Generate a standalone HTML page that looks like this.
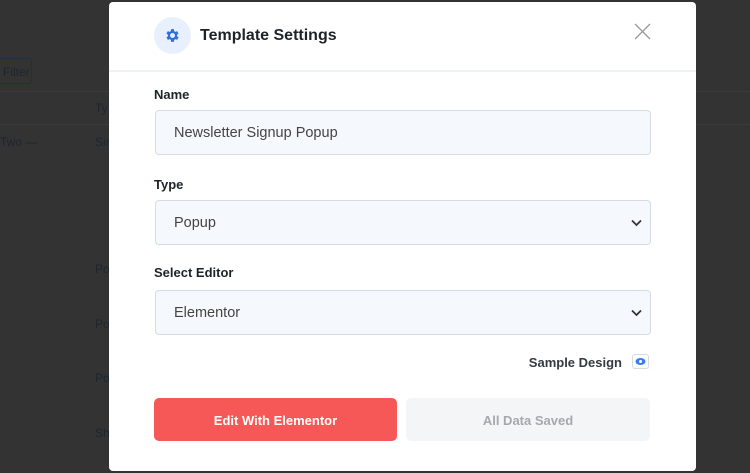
<!DOCTYPE html><html><head><style>
body{margin:0;width:750px;height:473px;background:#333;font-family:"Liberation Sans",sans-serif;position:relative;overflow:hidden}
.bg{position:absolute;color:#1d2530;font-size:12px}
.m{position:absolute;left:109px;top:2px;width:587px;height:469px;background:#fff;border-radius:4px}
.lbl{position:absolute;left:45px;font-size:13px;font-weight:bold;color:#1e2329}
.inp{position:absolute;left:46px;height:45px;border:1px solid #d5dbe5;border-radius:4px;background:#f5f8fd;font-size:14.5px;color:#444;line-height:45px;padding-left:18px;box-sizing:border-box;width:496px}
.chev{position:absolute;right:8px;top:18px}
</style></head><body>
<div class="bg" style="left:-4px;top:58px;width:36px;height:26px;border:1px solid #1d3048;border-radius:3px;line-height:26px;padding-left:6px;box-sizing:border-box">Filter</div>
<div style="position:absolute;left:0;top:91px;width:750px;height:1px;background:#3a3a3a"></div>
<div style="position:absolute;left:0;top:124px;width:750px;height:1px;background:#3a3a3a"></div>
<div class="bg" style="left:95px;top:101px">Ty</div>
<div class="bg" style="left:0;top:135px">Two —</div>
<div class="bg" style="left:95px;top:135px">Sin</div>
<div class="bg" style="left:95px;top:262px">Po</div>
<div class="bg" style="left:95px;top:317px">Po</div>
<div class="bg" style="left:95px;top:371px">Po</div>
<div class="bg" style="left:95px;top:426px">Sh</div>
<div class="m">
<div style="position:absolute;left:45px;top:15px;width:37px;height:37px;border-radius:50%;background:#e9f0fd"></div>
<svg style="position:absolute;left:55px;top:25px" width="17" height="17" viewBox="0 0 24 24"><path fill="#2f6fe4" d="M19.4 13a7.5 7.5 0 000-2l2.1-1.6-2-3.5-2.5 1a7.6 7.6 0 00-1.7-1L15 3h-4l-.4 2.9a7.6 7.6 0 00-1.7 1l-2.5-1-2 3.5L6.6 11a7.5 7.5 0 000 2l-2.1 1.6 2 3.5 2.5-1a7.6 7.6 0 001.7 1L11 21h4l.4-2.9a7.6 7.6 0 001.7-1l2.5 1 2-3.5zM13 15.5a3.5 3.5 0 110-7 3.5 3.5 0 010 7z" transform="translate(-1 0)"/></svg>
<div style="position:absolute;left:91px;top:25px;font-size:16px;font-weight:bold;color:#1e2329">Template Settings</div>
<svg style="position:absolute;left:525px;top:21px" width="17" height="17"><path d="M1 1L16 16M16 1L1 16" stroke="#999" stroke-width="1.3"/></svg>
<div style="position:absolute;left:0;top:68px;width:587px;height:2px;background:#eef1f5"></div>
<div class="lbl" style="top:85px">Name</div>
<div class="inp" style="top:108px">Newsletter Signup Popup</div>
<div class="lbl" style="top:175px">Type</div>
<div class="inp" style="top:198px">Popup<svg class="chev" width="11" height="8"><path d="M1 1.5L5.5 6 10 1.5" stroke="#333" stroke-width="1.8" fill="none"/></svg></div>
<div class="lbl" style="top:263px">Select Editor</div>
<div class="inp" style="top:288px">Elementor<svg class="chev" width="11" height="8"><path d="M1 1.5L5.5 6 10 1.5" stroke="#333" stroke-width="1.8" fill="none"/></svg></div>
<div style="position:absolute;right:74px;top:353px;font-size:13px;font-weight:bold;color:#333a44">Sample Design</div>
<div style="position:absolute;left:523px;top:352px;width:17px;height:15px;border:1px solid #d5dbe5;border-radius:3px;box-sizing:border-box"><svg style="position:absolute;left:2px;top:2px" width="11" height="9"><ellipse cx="5.5" cy="4.5" rx="5" ry="3.5" fill="#3b7cf0"/><circle cx="5.5" cy="4.5" r="1.5" fill="#fff"/></svg></div>
<div style="position:absolute;left:45px;top:396px;width:243px;height:43px;background:#f55856;border-radius:5px;color:#fff;font-size:13px;font-weight:bold;text-align:center;line-height:45px">Edit With Elementor</div>
<div style="position:absolute;left:297px;top:396px;width:244px;height:43px;background:#f4f5f6;border-radius:5px;color:#a5a8ad;font-size:13px;font-weight:bold;text-align:center;line-height:45px">All Data Saved</div>
</div>
</body></html>
